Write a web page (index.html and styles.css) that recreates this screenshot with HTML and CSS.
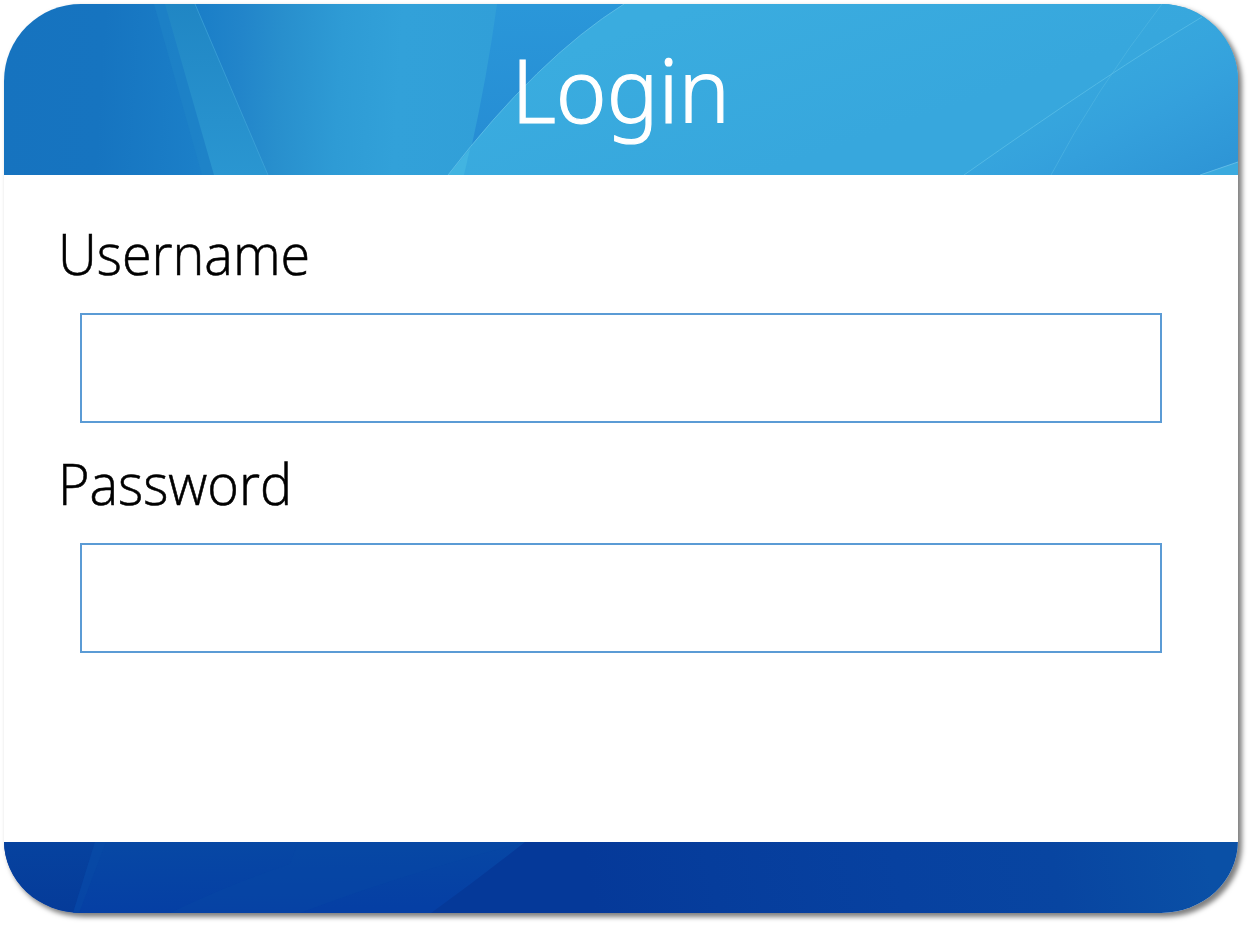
FILE: index.html
```html
<!DOCTYPE html>
<html lang="en">
<head>
<meta charset="utf-8">
<title>Login</title>
<link rel="stylesheet" href="styles.css">
</head>
<body>
<main class="card">
  <header class="card-header">
    <svg class="art" viewBox="4 4 1234 171" preserveAspectRatio="none" aria-hidden="true">
      <defs>
        <linearGradient id="base" gradientUnits="userSpaceOnUse" x1="4" y1="30" x2="500" y2="60">
          <stop offset="0" stop-color="#1673bf"/>
          <stop offset=".2" stop-color="#1674c0"/>
          <stop offset=".4" stop-color="#1b7fc8"/>
          <stop offset=".48" stop-color="#2285ca"/>
          <stop offset=".56" stop-color="#288fcd"/>
          <stop offset=".68" stop-color="#2e9bd5"/>
          <stop offset=".8" stop-color="#32a1d9"/>
          <stop offset="1" stop-color="#319fd8"/>
        </linearGradient>
        <linearGradient id="beam" x1="0" y1="0" x2="0" y2="1">
          <stop offset="0" stop-color="#2086c4"/>
          <stop offset="1" stop-color="#2a96d1"/>
        </linearGradient>
        <linearGradient id="wedge" x1="0" y1="0" x2="0" y2="1">
          <stop offset="0" stop-color="#2a97d9"/>
          <stop offset="1" stop-color="#268dd4"/>
        </linearGradient>
        <linearGradient id="sweep" gradientUnits="userSpaceOnUse" x1="700" y1="4" x2="760" y2="175">
          <stop offset="0" stop-color="#3aacdf"/>
          <stop offset="1" stop-color="#37a7dd"/>
        </linearGradient>
        <linearGradient id="corner" gradientUnits="userSpaceOnUse" x1="1060" y1="50" x2="1150" y2="230">
          <stop offset="0" stop-color="#37a8df" stop-opacity="0"/>
          <stop offset=".5" stop-color="#34a0dc"/>
          <stop offset="1" stop-color="#2c92d4"/>
        </linearGradient>
      </defs>
      <path fill="url(#base)" d="M4 4H1238V175H4Z"/>
      <path fill="#2086c8" opacity=".5" d="M154 4H170L215 175H202Z"/>
      <path fill="url(#beam)" d="M165 4H195L268 175H214Z"/>
      <path fill="none" stroke="#45aadc" opacity=".6" d="M195 4L268 175"/>
      <path fill="url(#wedge)" d="M497 4H624Q545 55 471 149Q487 77 497 4Z"/>
      <path fill="url(#sweep)" d="M624 4H1238V175H448Q538 58 624 4Z"/>
      <path fill="#42b4e1" d="M448 175L470 149L464 175Z"/>
      <path fill="none" stroke="#62bfe7" opacity=".8" d="M448 175Q538 58 624 4"/>
      <path fill="url(#corner)" d="M964 175Q1110 72 1202 17L1238 4V175Z"/>
      <path fill="none" stroke="#57bce6" opacity=".85" d="M964 175Q1110 72 1202 17"/>
      <path fill="none" stroke="#57bce6" opacity=".5" d="M1162 4Q1095 91 1051 175"/>
      <path fill="#3baade" d="M1200 175L1238 162V175Z"/>
      <path fill="none" stroke="#6dc3ea" opacity=".8" d="M1200 175L1238 162"/>
    </svg>
    <h1 class="title">Login</h1>
  </header>
  <form class="fields">
    <label class="label" for="username"><span class="label-text">Username</span></label>
    <input class="input" id="username" type="text">
    <label class="label" for="password"><span class="label-text">Password</span></label>
    <input class="input" id="password" type="password">
  </form>
  <footer class="card-footer">
    <svg class="art" viewBox="4 842 1234 71" preserveAspectRatio="none" aria-hidden="true">
      <defs>
        <linearGradient id="foot" gradientUnits="userSpaceOnUse" x1="600" y1="940" x2="1200" y2="820">
          <stop offset="0" stop-color="#053999"/>
          <stop offset=".2" stop-color="#063d9c"/>
          <stop offset=".5" stop-color="#0741a0"/>
          <stop offset=".75" stop-color="#0845a1"/>
          <stop offset="1" stop-color="#0a50a6"/>
        </linearGradient>
        <linearGradient id="footLeft" x1="0" y1="0" x2="0" y2="1">
          <stop offset="0" stop-color="#06429f"/>
          <stop offset="1" stop-color="#053b99"/>
        </linearGradient>
        <linearGradient id="footMid" x1="0" y1="0" x2=".15" y2="1">
          <stop offset="0" stop-color="#0748a4"/>
          <stop offset="1" stop-color="#053fa4"/>
        </linearGradient>
      </defs>
      <path fill="url(#foot)" d="M4 842H1238V913H4Z"/>
      <path fill="url(#footLeft)" d="M4 842H104L80 913H4Z"/>
      <path fill="url(#footMid)" d="M95 842H525Q478 879 431 913H73Z"/>
      <path fill="#0749a6" opacity=".4" d="M298 842H525Q400 875 300 913H170Q230 884 290 864Z"/>
      <path fill="#084ca6" opacity=".45" d="M95 842H106L79 913H73Z"/>
    </svg>
  </footer>
</main>
</body>
</html>
```
FILE: styles.css
```css
* { box-sizing: border-box; }

body {
  margin: 0;
  padding: 4px;
  height: 926px;
  overflow: hidden;
  background: #fff;
  font-family: "Noto Sans", "Open Sans", sans-serif;
  font-weight: 300;
}

.card {
  display: flex;
  flex-direction: column;
  width: 1234px;
  height: 909px;
  overflow: hidden;
  background: #fff;
  border-radius: 77px 77px 77px 77px / 77px 77px 72px 72px;
  box-shadow: 3.5px 3.5px 5px rgba(0, 0, 0, .5);
}

.card-header {
  display: grid;
  grid-template-rows: 171px;
  height: 171px;
}

.card-header > * { grid-area: 1 / 1; }

.art {
  display: block;
  width: 100%;
  height: 100%;
}

.title {
  z-index: 1;
  justify-self: center;
  margin: 0;
  color: #fff;
  font-size: 89px;
  font-weight: 300;
  line-height: 170px;
  transform: scaleX(.97);
  -webkit-text-stroke: 1.2px #fff;
}

.fields {
  display: flex;
  flex: 1;
  flex-direction: column;
  padding: 18px 76px 0 54px;
}

.label {
  height: 120px;
  font-family: "Open Sans", "Noto Sans", sans-serif;
  font-size: 57px;
  line-height: 121px;
  color: #000;
  -webkit-text-stroke: .6px #000;
}

.label-text {
  display: inline-block;
  transform: scaleX(.946);
  transform-origin: left;
}

.input {
  height: 110px;
  margin-left: 22px;
  padding: 0 20px;
  border: 2px solid #5b9bd5;
  border-radius: 0;
  outline: 0;
  background: #fff;
  font: inherit;
  font-size: 57px;
}

.card-footer { height: 71px; }
```
